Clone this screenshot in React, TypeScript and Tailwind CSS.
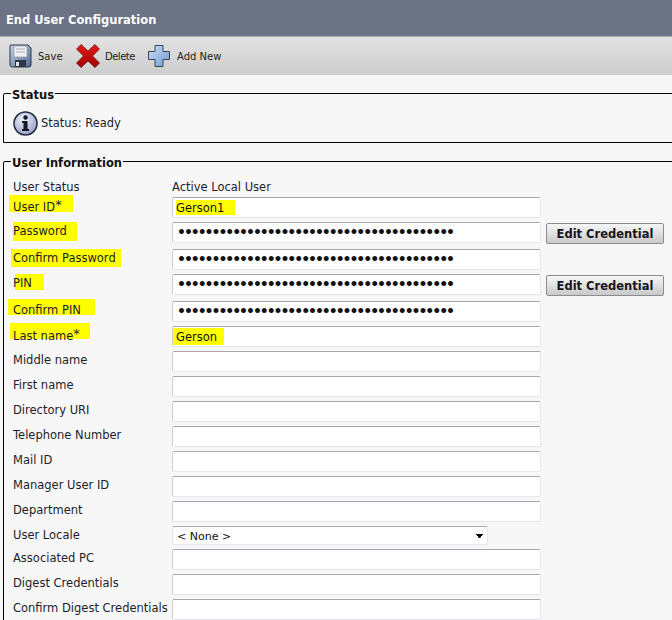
const font = "font-['DejaVu_Sans',Verdana,sans-serif]";

type Row = {
  label: string;
  star?: boolean;
  type?: "text" | "password" | "select";
  value?: string;
  button?: boolean;
  height: string;
  mark?: string;
  valueMark?: string;
};

const dots = "x".repeat(40);

const rows: Row[] = [
  { label: "User ID", star: true, value: "Gerson1", height: "h-[25px]", mark: "left-[-4px] top-[-2px] w-[64px] h-[17px]", valueMark: "left-[4px] top-[3px] w-[59px] h-[15px]" },
  { label: "Password", type: "password", value: dots, button: true, height: "h-[27px]", mark: "left-0 top-0 w-[64px] h-[19px]" },
  { label: "Confirm Password", type: "password", value: dots, height: "h-[25px]", mark: "left-[-2px] top-0 w-[110px] h-[18px]" },
  { label: "PIN", type: "password", value: dots, button: true, height: "h-[27px]", mark: "left-[2px] top-0 w-[29px] h-[16px]" },
  { label: "Confirm PIN", type: "password", value: dots, height: "h-[25px]", mark: "left-[-5px] top-[-2px] w-[87px] h-[16px]" },
  { label: "Last name", star: true, value: "Gerson", height: "h-[25px]", mark: "left-[-3px] top-[-3px] w-[80px] h-[16px]", valueMark: "left-0 top-[2px] w-[52px] h-[17px]" },
  { label: "Middle name", height: "h-[25px]" },
  { label: "First name", height: "h-[25px]" },
  { label: "Directory URI", height: "h-[25px]" },
  { label: "Telephone Number", height: "h-[25px]" },
  { label: "Mail ID", height: "h-[25px]" },
  { label: "Manager User ID", height: "h-[25px]" },
  { label: "Department", height: "h-[25px]" },
  { label: "User Locale", type: "select", value: "< None >", height: "h-[23px]" },
  { label: "Associated PC", height: "h-[25px]" },
  { label: "Digest Credentials", height: "h-[25px]" },
  { label: "Confirm Digest Credentials", height: "h-[25px]" },
];

function SaveIcon() {
  return (
    <svg width="23" height="24" viewBox="0 0 23 24">
      <defs>
        <linearGradient id="disk" x1="0" y1="0" x2="1" y2="1">
          <stop offset="0" stopColor="#c5d3e6" />
          <stop offset="1" stopColor="#4f6a94" />
        </linearGradient>
      </defs>
      <path d="M2 1h17l3 3v17a2 2 0 0 1-2 2H3a2 2 0 0 1-2-2V2a1 1 0 0 1 1-1z" fill="url(#disk)" stroke="#2c3648" />
      <rect x="5" y="2" width="13" height="11" fill="#eef0f3" stroke="#8c96a6" strokeWidth="0.7" />
      <path d="M7 5h9M7 8h9" stroke="#a5adba" strokeWidth="1" />
      <rect x="6" y="16" width="11" height="7" fill="#2f3645" />
      <rect x="7" y="18" width="3" height="4" fill="#dfe5ee" />
    </svg>
  );
}

function DeleteIcon() {
  return (
    <svg width="24" height="24" viewBox="0 0 24 24">
      <defs>
        <linearGradient id="cross" x1="0" y1="0" x2="0" y2="1">
          <stop offset="0" stopColor="#e81818" />
          <stop offset="1" stopColor="#a00000" />
        </linearGradient>
      </defs>
      <path
        d="M5 .5l7 6.500 7-6.500 4.500 4.500-7 7 7 7-4.500 4.500-7-6.500-7 6.500L.5 19l7-7-7-7z"
        fill="url(#cross)"
        stroke="#6e1212"
        strokeWidth="0.8"
        strokeLinejoin="miter"
      />
    </svg>
  );
}

function AddIcon() {
  return (
    <svg width="22" height="22" viewBox="0 0 22 22">
      <defs>
        <linearGradient id="plus" x1="0" y1="0" x2="1" y2="1">
          <stop offset="0" stopColor="#c9def4" />
          <stop offset="1" stopColor="#6d9bd2" />
        </linearGradient>
      </defs>
      <path d="M7 .5h8v6h6.500v8H15v7H7v-7H.5v-8H7z" fill="url(#plus)" stroke="#3a4658" />
    </svg>
  );
}

function InfoIcon() {
  return (
    <svg width="25" height="25" viewBox="0 0 25 25">
      <defs>
        <radialGradient id="info" cx="0.4" cy="0.3" r="0.8">
          <stop offset="0" stopColor="#f0f2fa" />
          <stop offset="1" stopColor="#8f96c4" />
        </radialGradient>
      </defs>
      <circle cx="12.500" cy="12.500" r="11.500" fill="url(#info)" stroke="#20283c" strokeWidth="1.500" />
      <circle cx="12.500" cy="6.500" r="2.200" fill="#111827" />
      <path d="M9 10h5.500v8H16v2H9v-2h1.500v-6H9z" fill="#111827" />
    </svg>
  );
}

function ToolButton({ icon, label, className, labelClass = "" }: { icon: React.ReactNode; label: string; className: string; labelClass?: string }) {
  return (
    <div className={`flex items-center ${className}`}>
      {icon}
      <span className={`text-[10px] text-[#1c1c1c] ${labelClass}`}>{label}</span>
    </div>
  );
}

function Field({ row }: { row: Row }) {
  if (row.type === "select") {
    return (
      <div className="relative">
        <select className={`${font} block h-[19px] w-[316px] appearance-none rounded-[2px] border border-[#e3e6ec] border-t-[#a8a8a8] bg-white pl-[4px] pt-[2px] text-[11px] text-[#111]`}>
          <option>{row.value}</option>
        </select>
        <svg className="absolute right-[4px] top-[8px]" width="8" height="5" viewBox="0 0 8 5">
          <path d="M0 0h7v1H6v1H5v1H4.500v1h-2V3H2V2H1V1H0z" fill="#000" />
        </svg>
      </div>
    );
  }

  return (
    <div className="relative h-[21px] w-[369px] rounded-[2px] bg-white">
      {row.valueMark && <span className={`absolute bg-[#ffff00] ${row.valueMark}`} />}
      <input
        readOnly
        type={row.type === "password" ? "password" : "text"}
        value={row.value ?? ""}
        className={`${font} relative block h-[21px] w-[369px] rounded-[2px] border border-[#e3e6ec] border-t-[#a8a8a8] border-l-[#d0d0d0] bg-transparent text-[#111] ${row.type === "password" ? "px-[4px] text-[14px] font-bold tracking-[-2.050px]" : "px-[3px] pt-[1px] text-[11.500px]"}`}
      />
    </div>
  );
}

function FormRow({ row }: { row: Row }) {
  return (
    <div className={`flex items-start ${row.height}`}>
      <div className="w-[159px] shrink-0 text-[11.500px] leading-[13px] text-[#1d1d2b]">
        <span className="relative inline-block whitespace-nowrap pt-[3px]">
          {row.mark && <span className={`absolute bg-[#ffff00] ${row.mark}`} />}
          <span className="relative">
            {row.label}
            {row.star && <span className="relative top-[-2px] text-[13px] leading-none">*</span>}
          </span>
        </span>
      </div>
      <Field row={row} />
      {row.button && (
        <button className={`${font} ml-[5px] mt-[1px] h-[21px] w-[118px] rounded-[2px] border border-[#8c8c8c] bg-gradient-to-b from-[#f7f7f7] to-[#c9c9c9] pt-[2px] text-[11.500px] font-bold text-[#14141e]`}>
          Edit Credential
        </button>
      )}
    </div>
  );
}

export default function App() {
  return (
    <div className={`${font} h-[620px] w-[672px] overflow-hidden bg-[#f7f7f7]`}>
      <div className="flex h-[36px] items-center bg-[#6b7385] pl-[6px] pt-[6px] text-[11.500px] font-bold text-white">
        End User Configuration
      </div>
      <div className="h-[1px] bg-[#a8a8a8]" />
      <div className="flex h-[38px] items-center bg-gradient-to-b from-[#e2e2e2] to-[#cdcdcd] pl-[9px]">
        <ToolButton icon={<SaveIcon />} label="Save" className="w-[67px] gap-[6px]" />
        <ToolButton icon={<DeleteIcon />} label="Delete" className="w-[72px] gap-[5px]" labelClass="tracking-[-0.500px]" />
        <ToolButton icon={<AddIcon />} label="Add New" className="gap-[7px]" />
      </div>

      <fieldset className="ml-[3px] mt-[12px] h-[56px] w-[700px] rounded-tl-[2px] border border-black">
        <legend className="ml-[7px] h-[13px] px-[1px] text-[11.500px] font-bold leading-[16px] text-[#111]">Status</legend>
        <div className="flex items-center gap-[3px] pl-[9px] pt-[11px]">
          <InfoIcon />
          <span className="text-[11.500px] text-[#1d1d2b]">Status: Ready</span>
        </div>
      </fieldset>

      <fieldset className="ml-[3px] mt-[12px] h-[520px] w-[700px] rounded-tl-[2px] border border-black pl-[9px]">
        <legend className="ml-[-2px] h-[13px] px-[1px] text-[11.500px] font-bold leading-[16px] text-[#111]">User Information</legend>
        <div className="flex h-[29px] items-start pt-[13px] text-[11.500px] leading-[13px] text-[#1d1d2b]">
          <div className="w-[159px]">User Status</div>
          <div>Active Local User</div>
        </div>
        {rows.map((row) => (
          <FormRow key={row.label} row={row} />
        ))}
      </fieldset>
    </div>
  );
}
